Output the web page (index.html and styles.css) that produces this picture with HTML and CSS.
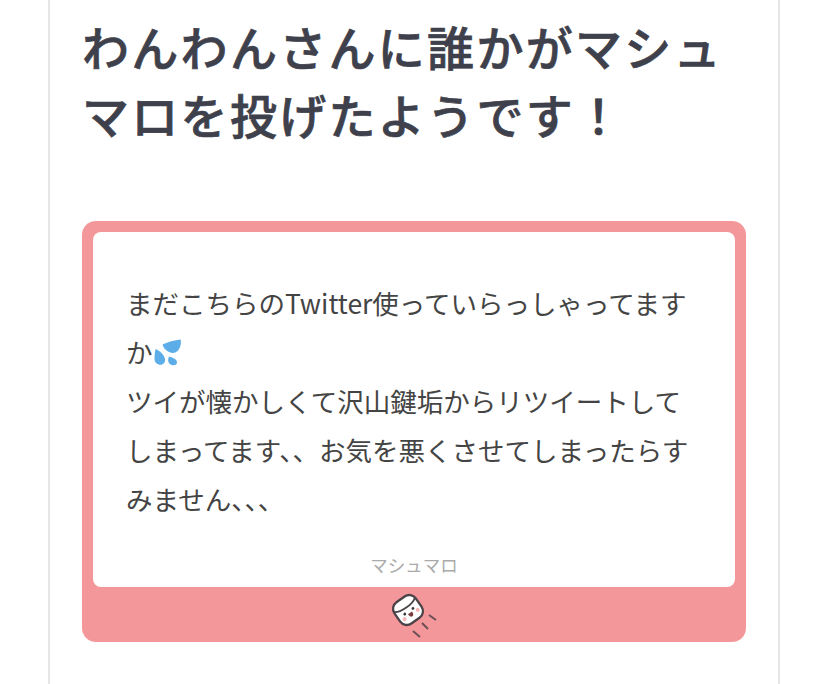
FILE: index.html
```html
<!DOCTYPE html>
<html lang="ja">
  <head>
    <meta charset="UTF-8" />
    <meta name="viewport" content="width=device-width, initial-scale=1.0" />
    <title>マシュマロ</title>
    <link rel="stylesheet" href="styles.css">
  </head>
  <body>
    <div class="panel">
      <h1 class="title">わんわんさんに誰かがマシュマロを投げたようです！</h1>
      <div class="card">
        <div class="card-body">
          <p class="message">まだこちらのTwitter使っていらっしゃってますか<svg class="sweat" viewBox="0 0 38 36" aria-hidden="true"><path d="M31.700 5.500C32.500 10 31 14.500 28.500 17c-2.500 2.500-6.500 2.500-9.500.500-3-2-5-4.500-5.500-7 5.500-2.500 12-4.500 18.200-5z" fill="#5dade8"/><path d="M6.500 15c4.500 2 8.500 5.500 9.500 10 .5 3.200-1.500 5.800-4.500 5.800-3.500 0-6-2.500-6-6 0-3.500.3-6.800 1-9.800z" fill="#5dade8"/><path d="M20 22.500c3.500 1 7.500 2.500 8 5.500.2 2-1.300 3.300-3.500 3.300-2.800 0-5-1.800-5.300-4.300-.2-1.500.3-3 .8-4.500z" fill="#5dade8"/></svg><br>ツイが懐かしくて沢山鍵垢からリツイートしてしまってます、、お気を悪くさせてしまったらすみません、、、</p>
          <div class="brand">マシュマロ</div>
        </div>
        <div class="card-foot">
          <svg class="mallow" viewBox="0 0 52 52" aria-hidden="true">
            <g transform="translate(20 22) rotate(-35)">
              <rect x="-13" y="-13" width="26" height="26" rx="8" fill="#fff" stroke="#4b4347" stroke-width="2.300"/>
              <path d="M-12.500 -6c5 4 20 4 25 0" fill="none" stroke="#4b4347" stroke-width="1.800"/>
              <circle cx="-5" cy="1.500" r="1.400" fill="#333"/>
              <circle cx="5" cy="1.500" r="1.400" fill="#333"/>
              <path d="M-2.500 3.500h5c0 3-1.100 4.200-2.500 4.200s-2.500-1.200-2.500-4.200z" fill="#7a3b3b"/>
              <circle cx="-8" cy="5.500" r="2" fill="#f7b5b5"/>
              <circle cx="8" cy="5.500" r="2" fill="#f7b5b5"/>
            </g>
            <path d="M41 27l7 5M34 35l6 6M25 43l7 6" stroke="#6b5055" stroke-width="2" fill="none"/>
          </svg>
        </div>
      </div>
    </div>
  </body>
</html>
```

FILE: styles.css
```css
* {
  margin: 0;
  padding: 0;
  box-sizing: border-box;
}
html,
body {
  height: 684px;
  overflow: hidden;
  background: #fff;
}
body {
  font-family: "Noto Sans CJK JP", "Noto Sans", sans-serif;
}
.panel {
  width: 732px;
  height: 684px;
  margin-left: 48px;
  padding: 12px 32px 0;
  border-left: 2px solid #e6e6e6;
  border-right: 2px solid #e6e6e6;
}
.title {
  font-size: 47px;
  line-height: 68px;
  letter-spacing: 2.300px;
  font-weight: 500;
  -webkit-text-stroke: 0.7px #3e404b;
  color: #3e404b;
  margin-bottom: 73px;
}
.card {
  width: 664px;
  background: #f4979b;
  border-radius: 14px;
  padding: 11px 11px 0;
}
.card-body {
  background: #fff;
  border-radius: 8px;
  height: 355px;
  padding: 46px 34px 0;
  display: flex;
  flex-direction: column;
}
.message {
  font-size: 26.500px;
  line-height: 49px;
  margin-left: -1px;
  color: #444;
}
.sweat {
  width: 38px;
  height: 36px;
  margin: -10px 0 -10px -4px;
  vertical-align: 3px;
}
.brand {
  margin-top: auto;
  padding-bottom: 9px;
  text-align: center;
  font-size: 17.500px;
  line-height: 26px;
  color: #aaa;
}
.card-foot {
  height: 55px;
  display: flex;
  justify-content: center;
  align-items: flex-start;
}
.mallow {
  width: 52px;
  height: 52px;
  margin-top: 1px;
}
```
